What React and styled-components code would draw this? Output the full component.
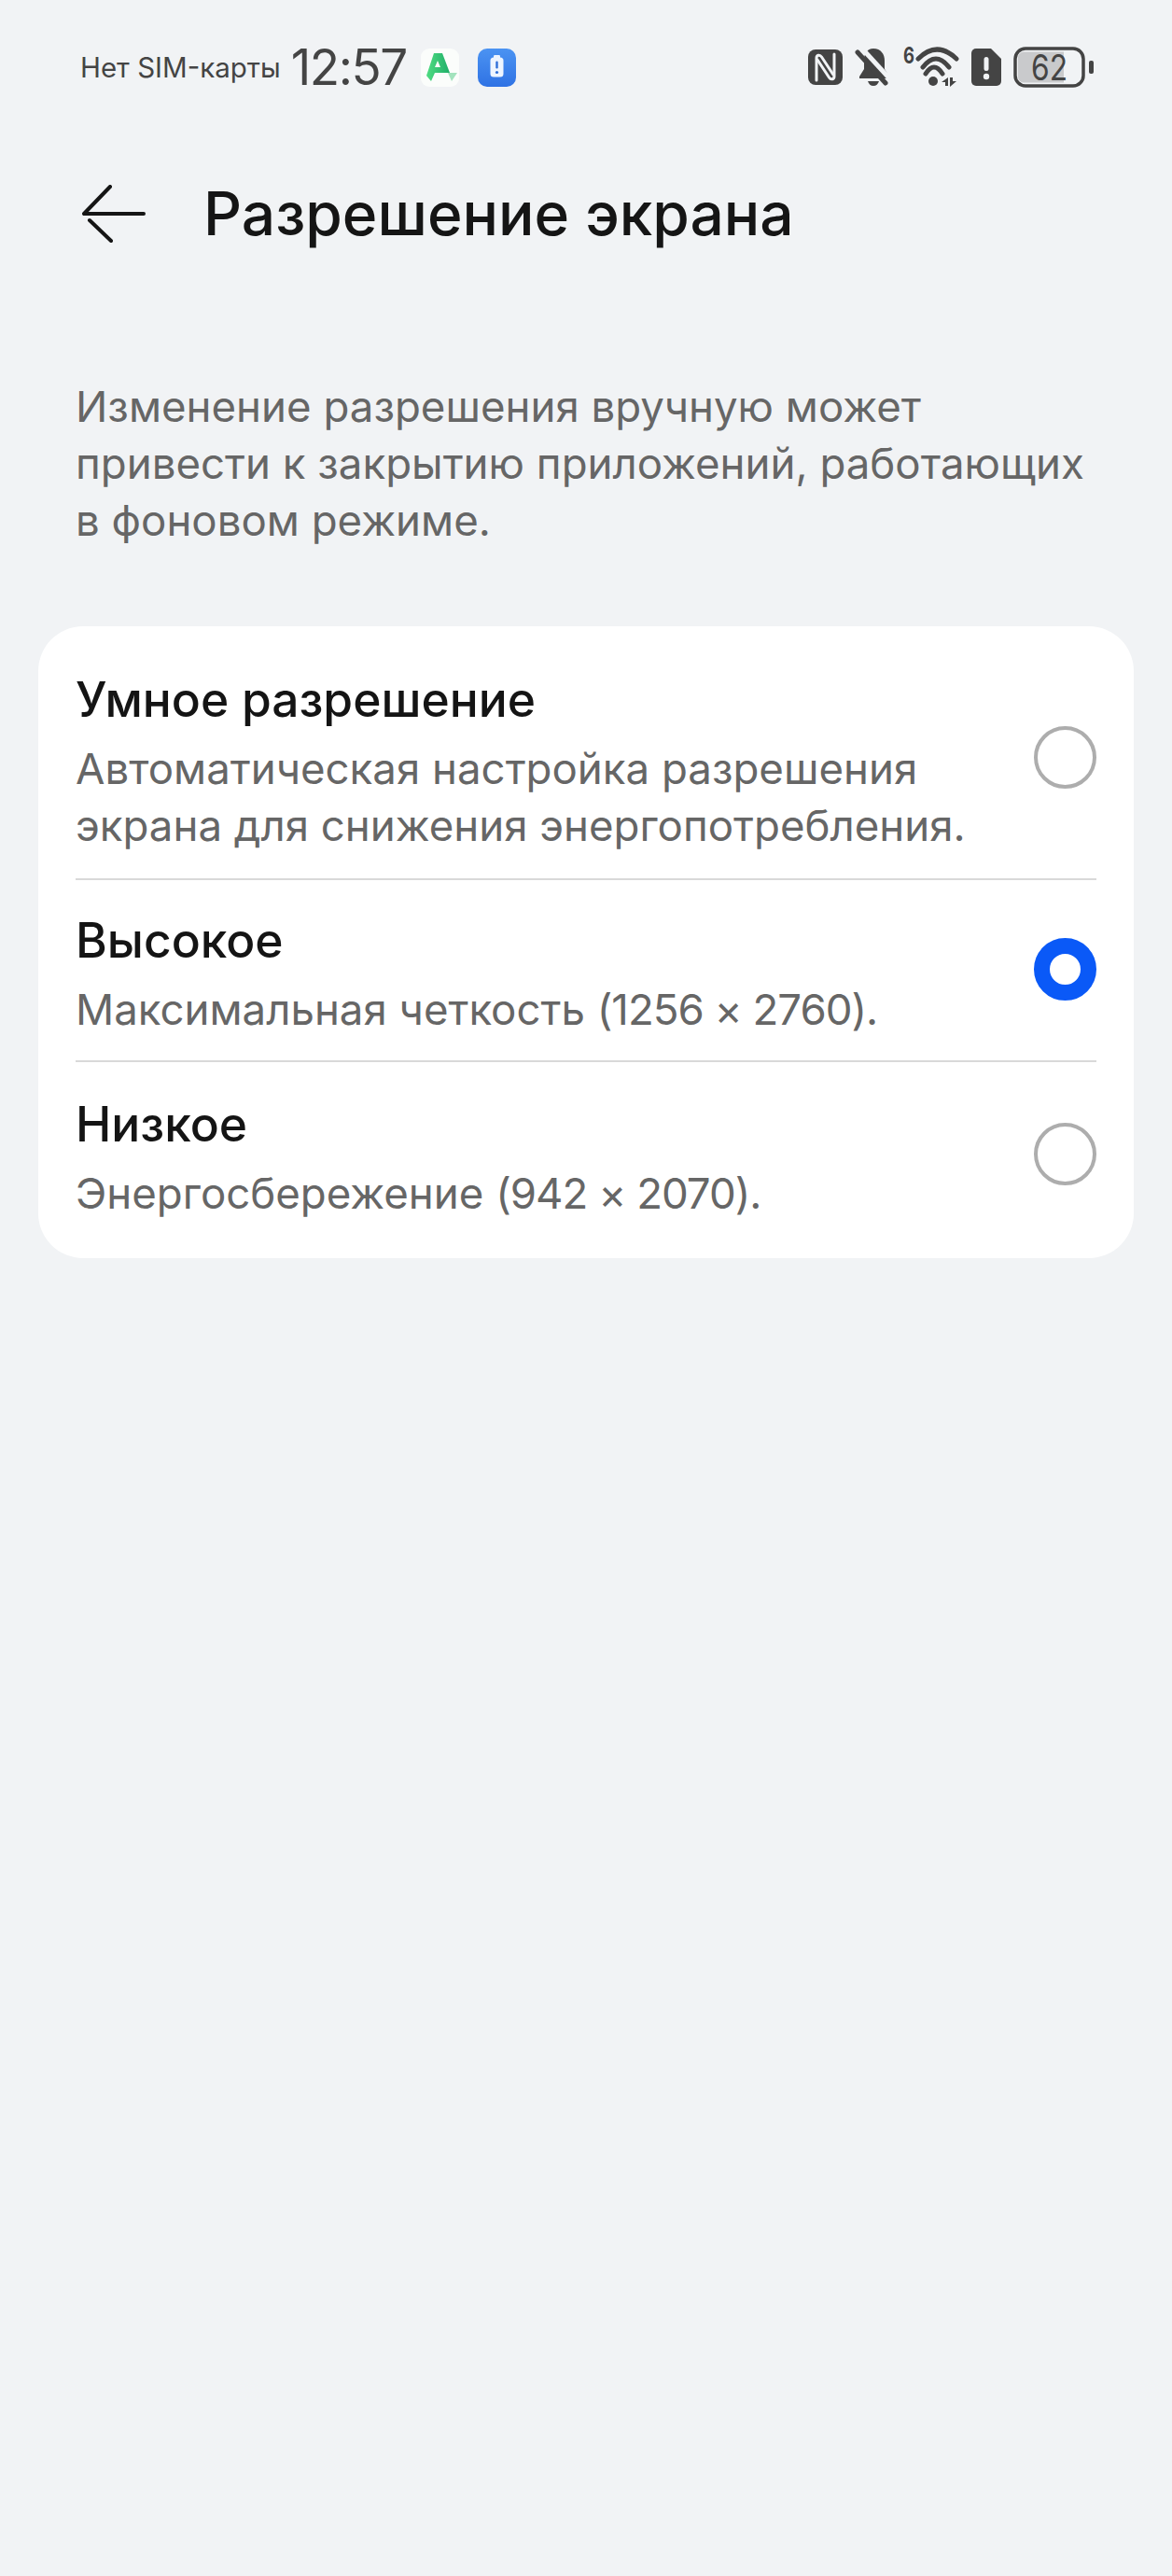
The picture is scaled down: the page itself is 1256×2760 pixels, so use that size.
import React from 'react';
import styled, { createGlobalStyle } from 'styled-components';

const Global = createGlobalStyle`
  html, body {
    margin: 0;
    padding: 0;
    background: #f1f3f5;
  }
  body {
    font-family: Inter, "Noto Sans", sans-serif;
  }
`;

const Screen = styled.div`
  width: 1256px;
  height: 2760px;
  background: #f1f3f5;
  overflow: hidden;
`;

const StatusBar = styled.div`
  display: flex;
  align-items: center;
  justify-content: space-between;
  height: 44px;
  padding: 50px 84px 0 86px;
  color: #444;
`;

const StatusLeft = styled.div`
  display: flex;
  align-items: center;
`;

const Carrier = styled.span`
  font-size: 29.5px;
  line-height: 44px;
  margin-right: 11px;
`;

const Clock = styled.span`
  font-size: 53px;
  letter-spacing: -1.5px;
  line-height: 60px;
  margin-right: 15px;
`;

const StatusRight = styled.div`
  display: flex;
  align-items: center;
  gap: 13px;
`;

const AppIcon = styled.svg`
  display: block;
  margin-right: 20px;
`;

const Header = styled.div`
  display: flex;
  align-items: center;
  height: 70px;
  padding: 100px 0 0 88px;
`;

const BackIcon = styled.svg`
  display: block;
  margin-right: 62px;
`;

const Title = styled.h1`
  margin: 0;
  font-size: 64px;
  line-height: 70px;
  font-weight: 500;
  color: #151515;
`;

const Note = styled.p`
  margin: 141px 40px 0 81px;
  font-size: 45.6px;
  line-height: 61px;
  color: #666;
`;

const Card = styled.div`
  margin: 83px 41px 0;
  padding: 0 40px;
  background: #fff;
  border-radius: 48px;
`;

const Row = styled.div`
  display: flex;
  justify-content: space-between;
  box-sizing: border-box;
  height: ${(p) => p.$height}px;
  border-bottom: ${(p) => (p.$last ? 'none' : '2px solid #d9d9d9')};
`;

const RowText = styled.div`
  flex: 1;
  padding-top: ${(p) => p.$top}px;
`;

const RowTitle = styled.div`
  font-size: 51.5px;
  line-height: 66px;
  font-weight: 500;
  margin-bottom: 11px;
  color: #141414;
`;

const RowSub = styled.div`
  font-size: 45.6px;
  line-height: 61px;
  color: #666;
`;

const Numbers = styled.span`
  letter-spacing: -1px;
`;

const Radio = styled.span`
  flex: none;
  box-sizing: border-box;
  width: 67px;
  height: 67px;
  margin-top: ${(p) => p.$top}px;
  border-radius: 50%;
  border: ${(p) => (p.$on ? '17px solid #0a59f7' : '4px solid #adadad')};
  background: #fff;
`;

const items = [
  {
    title: 'Умное разрешение',
    sub: ['Автоматическая настройка разрешения', 'экрана для снижения энергопотребления.'],
    height: 272,
    top: 45,
    radioTop: 107,
  },
  {
    title: 'Высокое',
    sub: ['Максимальная четкость '],
    numbers: '(1256 × 2760).',
    height: 195,
    top: 31,
    radioTop: 62,
    on: true,
  },
  {
    title: 'Низкое',
    sub: ['Энергосбережение '],
    numbers: '(942 × 2070).',
    height: 210,
    top: 33,
    radioTop: 65,
    last: true,
  },
];

export default function App() {
  return (
    <Screen>
      <Global />
      <StatusBar>
        <StatusLeft>
          <Carrier>Нет SIM-карты</Carrier>
          <Clock>12:57</Clock>
          <AppIcon width="41" height="41" viewBox="0 0 41 41">
            <defs>
              <linearGradient id="apk" x1="0" y1="0" x2="1" y2="0">
                <stop offset="0" stopColor="#4fdc82" />
                <stop offset="1" stopColor="#1fae68" />
              </linearGradient>
            </defs>
            <rect width="41" height="41" rx="9" fill="#fbfdfb" />
            <path
              d="M14 5h9l8 21H15l-4 9-5-6zM18 13l-3 7h6z"
              fill="url(#apk)"
              fillRule="evenodd"
            />
            <path d="M29 26h10l-6 9z" fill="#a3e3bd" />
          </AppIcon>
          <AppIcon width="41" height="41" viewBox="0 0 41 41">
            <defs>
              <linearGradient id="guard" x1="0" y1="0" x2="0" y2="1">
                <stop offset="0" stopColor="#4b93f2" />
                <stop offset="1" stopColor="#2f72e4" />
              </linearGradient>
            </defs>
            <rect width="41" height="41" rx="10" fill="url(#guard)" />
            <rect x="13.500" y="9.500" width="14" height="21" rx="3.500" fill="#eef5ff" />
            <rect x="17" y="7" width="7" height="3.500" rx="1.200" fill="#eef5ff" />
            <rect x="19.300" y="13.500" width="2.400" height="8" rx="1.200" fill="#2f6fd8" />
            <circle cx="20.500" cy="25.500" r="1.600" fill="#2f6fd8" />
          </AppIcon>
        </StatusLeft>
        <StatusRight>
          <svg width="37" height="38" viewBox="0 0 37 38">
            <rect width="37" height="38" rx="8" fill="#444" />
            <path
              d="M9 33V9c0-3 3.500-4 5.500-1L27 27"
              fill="none"
              stroke="#f1f3f5"
              strokeWidth="3"
              strokeLinecap="round"
            />
            <path
              d="M28 5v24c0 3-3.500 4-5.500 1L10 11"
              fill="none"
              stroke="#f1f3f5"
              strokeWidth="3"
              strokeLinecap="round"
            />
          </svg>
          <svg width="39" height="42" viewBox="0 0 39 42">
            <path d="M20 1c8 0 12 6 12 13v9l5 8v2H5v-2l5-8v-9c0-7 3-13 10-13z" fill="#444" />
            <path d="M14 36h12c-1 3-3 5-6 5s-5-2-6-5z" fill="#444" />
            <path d="M7 0l33 36" stroke="#f1f3f5" strokeWidth="5" />
            <path d="M3 5l30 33" stroke="#444" strokeWidth="5" strokeLinecap="round" />
          </svg>
          <svg width="60" height="56" viewBox="0 -6 60 56">
            <text
              x="0"
              y="18"
              fontFamily="Inter, sans-serif"
              fontWeight="700"
              fontSize="24"
              textLength="12"
              lengthAdjust="spacingAndGlyphs"
              fill="#444"
            >
              6
            </text>
            <path
              d="M16 13Q36-7 57 13M21 22Q35 4 49 22M24 29Q33 15 42 29"
              fill="none"
              stroke="#444"
              strokeWidth="5"
              strokeLinecap="round"
            />
            <circle cx="32" cy="37" r="5" fill="#444" />
            <path d="M48 33v9h-3v-4h-4zM50 33h3v4h4l-7 6z" fill="#444" />
          </svg>
          <svg width="32" height="40" viewBox="0 0 32 40">
            <path d="M5 0h16l11 11v24a5 5 0 0 1-5 5H5a5 5 0 0 1-5-5V5a5 5 0 0 1 5-5z" fill="#444" />
            <rect x="13.500" y="9" width="5" height="15" rx="2.500" fill="#f1f3f5" />
            <circle cx="16" cy="30" r="3.200" fill="#f1f3f5" />
          </svg>
          <svg width="86" height="44" viewBox="0 0 86 44">
            <rect x="2" y="2" width="73" height="40" rx="11" fill="#f1f3f5" stroke="#444" strokeWidth="3.500" />
            <path d="M11 5.500h43v33H11a6 6 0 0 1-6-6v-21a6 6 0 0 1 6-6z" fill="#c9cacc" />
            <text
              x="19"
              y="36"
              fontFamily="Inter, sans-serif"
              fontSize="38"
              textLength="39"
              lengthAdjust="spacingAndGlyphs"
              fill="#444"
            >
              62
            </text>
            <rect x="81" y="15" width="5" height="14" rx="2" fill="#444" />
          </svg>
        </StatusRight>
      </StatusBar>
      <Header>
        <BackIcon width="68" height="62" viewBox="0 0 68 62">
          <path
            d="M30 2L2 31h64M8 38l23 22"
            fill="none"
            stroke="#151515"
            strokeWidth="4"
            strokeLinecap="round"
            strokeLinejoin="round"
          />
        </BackIcon>
        <Title>Разрешение экрана</Title>
      </Header>
      <Note>
        Изменение разрешения вручную может
        <br />
        привести к закрытию приложений, работающих
        <br />в фоновом режиме.
      </Note>
      <Card>
        {items.map((item) => (
          <Row key={item.title} $height={item.height} $last={item.last}>
            <RowText $top={item.top}>
              <RowTitle>{item.title}</RowTitle>
              {item.sub.map((line) => (
                <RowSub key={line}>
                  {line}
                  {item.numbers && <Numbers>{item.numbers}</Numbers>}
                </RowSub>
              ))}
            </RowText>
            <Radio $top={item.radioTop} $on={item.on} />
          </Row>
        ))}
      </Card>
    </Screen>
  );
}
